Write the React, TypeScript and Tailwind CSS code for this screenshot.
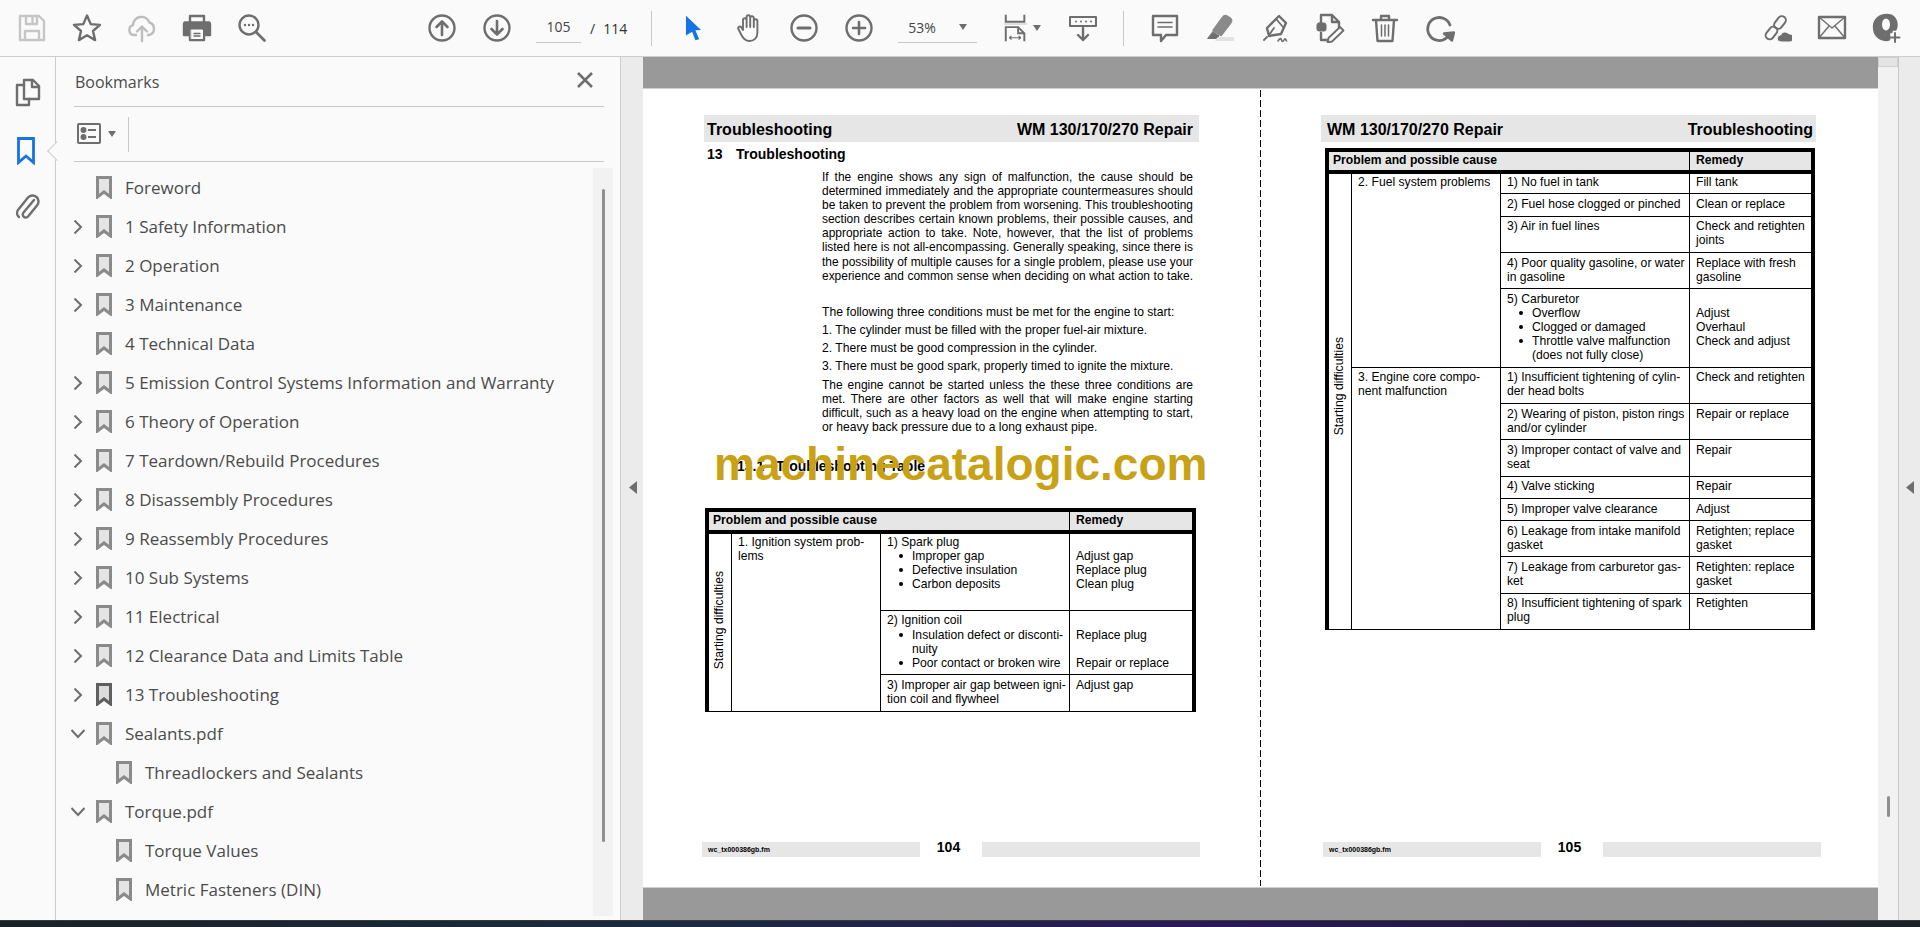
import React from 'react';

const Svg = ({ children, className = 'w-[30px] h-[30px]', box = '0 0 30 30' }: { children: React.ReactNode; className?: string; box?: string }) => (
  <svg viewBox={box} className={className} fill="none" stroke="#6e6e6e" strokeWidth="2.4" strokeLinejoin="round" strokeLinecap="round">
    {children}
  </svg>
);

const Tool = ({ children }: { children: React.ReactNode }) => (
  <div className="w-[55px] h-[56px] flex items-center justify-center shrink-0">{children}</div>
);

const Caret = () => (
  <svg viewBox="0 0 8 6" className="w-[8px] h-[6px]">
    <path d="M0 0h8L4 6z" fill="#6e6e6e" />
  </svg>
);

const ToolDivider = () => <div className="w-px h-[35px] bg-[#c8c8c8] shrink-0" />;

const Toolbar = () => (
  <div className="h-[57px] shrink-0 bg-[#fafafa] border-b border-[#cdcdcd] flex items-center pl-[4px] text-[#333] font-['Open_Sans',sans-serif] text-[15px]">
    <Tool>
      <Svg>
        <g stroke="#c6c6c6">
          <path d="M3 3h19l5 5v19H3z" />
          <path d="M9 3v8h11V3M15.5 5v4" />
          <path d="M8 27v-9h14v9" />
        </g>
      </Svg>
    </Tool>
    <Tool>
      <Svg>
        <path d="M15 2.5l3.7 8.6 9.3.8-7 6.1 2.1 9.1L15 22.3l-8.1 4.8L9 18 2 11.9l9.3-.8z" />
      </Svg>
    </Tool>
    <Tool>
      <Svg>
        <g stroke="#bdbdbd">
          <path d="M9 22H7a5 5 0 0 1-1-9.8A8.5 8.5 0 0 1 22.5 9.5 6.5 6.5 0 0 1 22 22h-1" />
          <path d="M15 28V14M10 18.5l5-5 5 5" />
        </g>
      </Svg>
    </Tool>
    <Tool>
      <Svg>
        <path d="M8 9V3h14v6" />
        <path d="M3 9.5h24a1.5 1.5 0 0 1 1 1.5v11h-6v5H8v-5H2V11a1.5 1.5 0 0 1 1-1.5z" fill="#6e6e6e" />
        <path d="M9.5 17h11v8.500h-11z" fill="#fafafa" stroke="#fafafa" strokeWidth="1" />
        <path d="M12 20.500h6M12 23h6" strokeWidth="1.400" />
      </Svg>
    </Tool>
    <Tool>
      <Svg>
        <circle cx="12" cy="12" r="9.500" />
        <path d="M19 19l8.500 8.500" strokeWidth="2.800" />
        <path d="M8 12h.01M12 12h.01M16 12h.01" strokeWidth="2.400" />
      </Svg>
    </Tool>
    <div className="ml-[135px] flex">
      <Tool>
        <Svg>
          <circle cx="15" cy="15" r="12.500" />
          <path d="M15 22V8.500M9.500 14L15 8.500l5.500 5.500" strokeWidth="2.600" />
        </Svg>
      </Tool>
      <Tool>
        <Svg>
          <circle cx="15" cy="15" r="12.500" />
          <path d="M15 8v13.500M9.500 16l5.500 5.500 5.500-5.500" strokeWidth="2.600" />
        </Svg>
      </Tool>
    </div>
    <div className="ml-[12px] w-[45px] h-[29px] mt-[1px] border-b border-[#c8c8c8] text-center leading-[26px] text-[14px] text-[#444]">105</div>
    <span className="ml-[9px] text-[14px]">/</span>
    <span className="ml-[8px] text-[14px] w-[24px]">114</span>
    <div className="ml-[24px]">
      <ToolDivider />
    </div>
    <div className="ml-[14px] flex">
      <Tool>
        <svg viewBox="0 0 18 26" className="w-[17px] h-[26px]">
          <path d="M1 0l16 15-6 .5L15 25l-4 1-3.500-9L1 21z" fill="#1473e6" />
        </svg>
      </Tool>
      <Tool>
        <Svg>
          <path d="M9 17V7a1.800 1.800 0 0 1 3.600 0v7V4a1.800 1.800 0 0 1 3.600 0v10V5a1.800 1.800 0 0 1 3.600 0v9V8a1.800 1.800 0 0 1 3.600 0v12c0 5-3.500 8-8 8-4 0-6-2-8-6l-3-6c-1-2 1.500-3.500 3-1.500z" strokeWidth="1.900" />
        </Svg>
      </Tool>
      <Tool>
        <Svg>
          <circle cx="15" cy="15" r="12.500" />
          <path d="M9 15h12" strokeWidth="3" />
        </Svg>
      </Tool>
      <Tool>
        <Svg>
          <circle cx="15" cy="15" r="12.500" />
          <path d="M9 15h12M15 9v12" strokeWidth="2.600" />
        </Svg>
      </Tool>
    </div>
    <div className="ml-[12px] w-[79px] h-[29px] mt-[1px] border-b border-[#c8c8c8] flex items-center text-[14px] text-[#444] pb-[2px]">
      <span className="ml-[10px] w-[51px]">53%</span>
      <Caret />
    </div>
    <div className="ml-[22px] w-[32px] flex items-center justify-center">
      <svg viewBox="0 0 26 30" className="w-[23px] h-[30px]" fill="none" stroke="#6e6e6e" strokeWidth="2.200">
        <path d="M2 0v8h21V0" />
        <path d="M0 10.500h26" stroke="#dcdcdc" strokeWidth="2" />
        <path d="M2 30V14h14l7 7v9M16 14v7h7" />
        <path d="M6 26h13M6 26l2.500-2M6 26l2.500 2M19 26l-2.500-2M19 26l-2.500 2" strokeWidth="1.300" />
      </svg>
    </div>
    <div className="ml-[2px]">
      <Caret />
    </div>
    <div className="ml-[14px] flex">
      <Tool>
        <Svg>
          <path d="M2 4h26v9H2z" strokeWidth="2" />
          <path d="M8 8.500h.01M13 8.500h.01M18 8.500h.01M23 8.500h.01" strokeWidth="2" />
          <path d="M15 15v12M10 22l5 5 5-5" strokeWidth="2.400" />
        </Svg>
      </Tool>
    </div>
    <div className="ml-[13px]">
      <ToolDivider />
    </div>
    <div className="ml-[13px] flex">
      <Tool>
        <Svg>
          <path d="M3 3h24v19H16l-5 6v-6H3z" />
          <path d="M8 9.500h14M8 14h14" strokeWidth="1.600" />
        </Svg>
      </Tool>
      <Tool>
        <Svg>
          <path d="M18 4.500a3 3 0 0 1 4-1l3 2a3 3 0 0 1 .5 4L16 22l-7.500-4.500z" fill="#8a8a8a" stroke="#8a8a8a" />
          <path d="M8 19l6 4-3 2.500H3z" fill="#6e6e6e" strokeWidth="1" />
          <path d="M13 24h16v4H10z" fill="#e2e2e2" stroke="none" />
        </Svg>
      </Tool>
      <Tool>
        <Svg>
          <path d="M19 3l7 7-5 11-12 2-2-8z" />
          <path d="M7 24L4 27M14 15l-5 7M23 14l-6-7" strokeWidth="1.800" />
          <path d="M18 28c2-3 3-3 3.500-1s1.500 2 2.500 0 1.500-1 2.500 1" strokeWidth="1.600" />
        </Svg>
      </Tool>
      <Tool>
        <Svg>
          <path d="M6 10V2h11l7 7v5M17 2v7h7M6 20v7h7" />
          <rect x="2" y="10" width="9" height="8" rx="2" fill="#6e6e6e" strokeWidth="1" />
          <path d="M25 14l3.500 3.500L17 28.500l-4.500 1 1-4.500z" strokeWidth="1.800" />
        </Svg>
      </Tool>
      <Tool>
        <Svg>
          <path d="M3 7h24M11 7V3h8v4M6 7l1.500 21h15L24 7" />
          <path d="M11.500 12v11M15 12v11M18.500 12v11" strokeWidth="1.500" />
        </Svg>
      </Tool>
      <Tool>
        <Svg>
          <path d="M22 24.500A11.500 11.500 0 1 1 25 12" strokeWidth="2.800" />
          <path d="M19 20.500l10-1-2 8z" fill="#6e6e6e" />
        </Svg>
      </Tool>
    </div>
    <div className="ml-auto flex pr-[6px]">
      <Tool>
        <Svg>
          <g transform="rotate(-52 9.500 20)" strokeWidth="2">
            <rect x="2.500" y="16" width="14" height="8" rx="4" />
          </g>
          <g transform="rotate(-52 18 9.500)" strokeWidth="2">
            <rect x="11" y="5.500" width="14" height="8" rx="4" />
          </g>
          <path d="M19 29a3.500 3.500 0 0 1-.5-7 5 5 0 0 1 8.500-1 4 4 0 0 1 1 8z" fill="#6e6e6e" stroke="#fafafa" strokeWidth="1" />
        </Svg>
      </Tool>
      <Tool>
        <Svg>
          <path d="M2 4h26v21H2z" />
          <path d="M2 4l13 11L28 4M2 25l10-12M28 25L18 13" strokeWidth="1.400" />
        </Svg>
      </Tool>
      <Tool>
        <Svg>
          <path d="M15 2c6 0 9.500 4 9.500 10 0 1.500-.5 3.500-1 4.500h-4v2.500h-2.500v7.500c-1 .5-2 .5-3 .5C7 27 2 21.500 2 14 2 7 7 2 15 2z" fill="#6e6e6e" />
          <ellipse cx="14" cy="11.500" rx="4" ry="6" fill="#fafafa" stroke="none" />
          <path d="M23 20v9M18.500 24.500h9" strokeWidth="2" />
        </Svg>
      </Tool>
    </div>
  </div>
);

const Rail = () => (
  <div className="w-[56px] shrink-0 bg-[#fafafa] border-r border-[#cdcdcd] relative flex flex-col items-center">
    <div className="mt-[21px] ml-[1px]">
      <Svg className="w-[26px] h-[29px]" box="0 0 26 29">
        <path d="M9 21V2h9l6 6v13z" />
        <path d="M17 2v7h7" />
        <path d="M9 7H2v20h12v-6" />
      </Svg>
    </div>
    <div className="mt-[30px] -ml-[4px]">
      <svg viewBox="0 0 18 28" className="w-[18px] h-[28px]" fill="none" stroke="#1473e6" strokeWidth="2.800">
        <path d="M1.500 1.500h15v24L9 19l-7.500 6.500z" />
      </svg>
    </div>
    <div className="mt-[26px] -ml-[2px]">
      <Svg className="w-[26px] h-[30px]" box="0 0 26 30">
        <path d="M20 9L9.500 21.500a3 3 0 0 0 4.500 4l9-11a6 6 0 0 0-9-8L4 19a5 5 0 0 0 1 7" strokeWidth="2.400" />
      </Svg>
    </div>
    {/* notch next to the active tab */}
    <div className="absolute right-[-1px] top-[87px] w-[14px] h-[14px] rotate-45 translate-x-[8px] bg-[#fafafa] border-l border-b border-[#cdcdcd]" />
  </div>
);

const Mark = ({ dark }: { dark?: boolean }) => (
  <svg viewBox="0 0 16 23" className="w-[16px] h-[23px] shrink-0">
    <path d="M1.500 1.500h13v19.500L8 16l-6.500 5z" fill={dark ? '#dcdcdc' : '#e4e4e4'} stroke={dark ? '#5f5f5f' : '#8a8a8a'} strokeWidth="3" />
  </svg>
);

const Chevron = ({ open }: { open?: boolean }) => (
  <svg viewBox="0 0 14 14" className="w-[14px] h-[14px] shrink-0" fill="none" stroke="#6e6e6e" strokeWidth="2">
    {open ? <path d="M.5 3l6.500 7 6.500-7" /> : <path d="M3.500 .5l6.500 6.500-6.500 6.500" />}
  </svg>
);

const marks: { label: string; arrow?: boolean; open?: boolean; nested?: boolean; dark?: boolean }[] = [
  { label: 'Foreword' },
  { label: '1 Safety Information', arrow: true },
  { label: '2 Operation', arrow: true },
  { label: '3 Maintenance', arrow: true },
  { label: '4 Technical Data' },
  { label: '5 Emission Control Systems Information and Warranty', arrow: true },
  { label: '6 Theory of Operation', arrow: true },
  { label: '7 Teardown/Rebuild Procedures', arrow: true },
  { label: '8 Disassembly Procedures', arrow: true },
  { label: '9 Reassembly Procedures', arrow: true },
  { label: '10 Sub Systems', arrow: true },
  { label: '11 Electrical', arrow: true },
  { label: '12 Clearance Data and Limits Table', arrow: true },
  { label: '13 Troubleshooting', arrow: true, dark: true },
  { label: 'Sealants.pdf', arrow: true, open: true },
  { label: 'Threadlockers and Sealants', nested: true },
  { label: 'Torque.pdf', arrow: true, open: true },
  { label: 'Torque Values', nested: true },
  { label: 'Metric Fasteners (DIN)', nested: true },
];

const BookmarksPanel = () => (
  <div className="w-[565px] shrink-0 bg-[#fafafa] border-r border-[#cdcdcd] flex flex-col pl-[18px] pr-[16px] font-['Open_Sans',sans-serif]">
    <div className="h-[50px] shrink-0 border-b border-[#c8c8c8] flex items-center justify-between">
      <span className="ml-[1px] text-[16px] text-[#4b4b4b]">Bookmarks</span>
      <svg viewBox="0 0 16 16" className="w-[16px] h-[16px] mr-[11px] -mt-[3px]" stroke="#6e6e6e" strokeWidth="2.600">
        <path d="M1 1l14 14M15 1L1 15" />
      </svg>
    </div>
    <div className="h-[55px] shrink-0 border-b border-[#c8c8c8] flex items-center pl-[3px]">
      <svg viewBox="0 0 24 21" className="w-[24px] h-[21px] -mt-[1px]" fill="none" stroke="#6e6e6e" strokeWidth="2">
        <rect x="1" y="1" width="22" height="19" rx="1" />
        <circle cx="6.500" cy="7" r="2" fill="#6e6e6e" />
        <circle cx="6.500" cy="14" r="2" fill="#6e6e6e" />
        <path d="M11 7h8M11 14h8" />
      </svg>
      <div className="ml-[7px]">
        <Caret />
      </div>
      <div className="ml-[12px] w-px h-[35px] bg-[#c8c8c8]" />
    </div>
    <div className="flex-1 flex pt-[6px] min-h-0">
      <div className="flex-1 min-w-0 text-[17px] text-[#4b4b4b]">
        {marks.map((m) => (
          <div key={m.label} className={m.nested ? 'h-[39px] flex items-center pl-[42px]' : 'h-[39px] flex items-center pl-[22px]'}>
            {!m.nested && (
              <div className="-ml-[25px] w-[25px] flex justify-start">{m.arrow && <Chevron open={m.open} />}</div>
            )}
            <Mark dark={m.dark} />
            <span className="ml-[13px] whitespace-nowrap">{m.label}</span>
          </div>
        ))}
      </div>
      <div className="w-[20px] shrink-0 mr-[-9px] mb-[4px] bg-[#f2f2f2] flex justify-center pt-[21px]">
        <div className="w-[3px] h-[653px] rounded-full bg-[#8f8f8f]" />
      </div>
    </div>
  </div>
);

const Arrow = () => (
  <svg viewBox="0 0 8 13" className="w-[8px] h-[13px]">
    <path d="M8 0v13L0 6.500z" fill="#6e6e6e" />
  </svg>
);

/* pdf pages */

const Line = ({ children, justify }: { children: React.ReactNode; justify?: boolean }) => (
  <div className={justify ? 'h-[14px] leading-[14px] text-[11.95px] [text-align:justify] [text-align-last:justify]' : 'h-[14px] leading-[14px] whitespace-nowrap'}>
    {children}
  </div>
);

const Bullet = ({ children, cont }: { children: React.ReactNode; cont?: boolean }) => (
  <div className="relative pl-[25px] h-[14px] leading-[14px] whitespace-nowrap">
    {!cont && <span className="absolute left-[12px] top-[5px] w-[4px] h-[4px] rounded-full bg-black" />}
    {children}
  </div>
);

type Row = { cls: string; cause: React.ReactNode; remedy: React.ReactNode };
type Section = { title: React.ReactNode; titleCls: string; rows: Row[] };

const Lines = ({ items }: { items: string[] }) => (
  <>
    {items.map((t, i) => (
      <Line key={i}>{t === '' ? '\u00a0' : t}</Line>
    ))}
  </>
);

const sectionsLeft: Section[] = [
  {
    title: <Lines items={['1. Ignition system prob-', 'lems']} />,
    titleCls: 'pt-[1px]',
    rows: [
      {
        cls: 'h-[77px] pt-[1px]',
        cause: (
          <>
            <Line>1) Spark plug</Line>
            <Bullet>Improper gap</Bullet>
            <Bullet>Defective insulation</Bullet>
            <Bullet>Carbon deposits</Bullet>
          </>
        ),
        remedy: <Lines items={['', 'Adjust gap', 'Replace plug', 'Clean plug']} />,
      },
      {
        cls: 'h-[64px] pt-[2px]',
        cause: (
          <>
            <Line>2) Ignition coil</Line>
            <div className="h-px" />
            <Bullet>Insulation defect or disconti-</Bullet>
            <Bullet cont>nuity</Bullet>
            <Bullet>Poor contact or broken wire</Bullet>
          </>
        ),
        remedy: (
          <>
            <Line>{'\u00a0'}</Line>
            <div className="h-px" />
            <Lines items={['Replace plug', '', 'Repair or replace']} />
          </>
        ),
      },
      {
        cls: 'h-[37px] pt-[3px]',
        cause: <Lines items={['3) Improper air gap between igni-', 'tion coil and flywheel']} />,
        remedy: <Line>Adjust gap</Line>,
      },
    ],
  },
];

const sectionsRight: Section[] = [
  {
    title: <Line>2. Fuel system problems</Line>,
    titleCls: 'pt-[1px]',
    rows: [
      { cls: 'h-[20px] pt-[1px]', cause: <Line>1) No fuel in tank</Line>, remedy: <Line>Fill tank</Line> },
      { cls: 'h-[23px] pt-[3px]', cause: <Line>2) Fuel hose clogged or pinched</Line>, remedy: <Line>Clean or replace</Line> },
      { cls: 'h-[36px] pt-[2px]', cause: <Line>3) Air in fuel lines</Line>, remedy: <Lines items={['Check and retighten', 'joints']} /> },
      {
        cls: 'h-[36px] pt-[3px]',
        cause: <Lines items={['4) Poor quality gasoline, or water', 'in gasoline']} />,
        remedy: <Lines items={['Replace with fresh', 'gasoline']} />,
      },
      {
        cls: 'h-[79px] pt-[3px]',
        cause: (
          <>
            <Line>5) Carburetor</Line>
            <Bullet>Overflow</Bullet>
            <Bullet>Clogged or damaged</Bullet>
            <Bullet>Throttle valve malfunction</Bullet>
            <Bullet cont>(does not fully close)</Bullet>
          </>
        ),
        remedy: <Lines items={['', 'Adjust', 'Overhaul', 'Check and adjust']} />,
      },
    ],
  },
  {
    title: <Lines items={['3. Engine core compo-', 'nent malfunction']} />,
    titleCls: 'pt-[2px]',
    rows: [
      { cls: 'h-[36px] pt-[2px]', cause: <Lines items={['1) Insufficient tightening of cylin-', 'der head bolts']} />, remedy: <Line>Check and retighten</Line> },
      { cls: 'h-[36px] pt-[3px]', cause: <Lines items={['2) Wearing of piston, piston rings', 'and/or cylinder']} />, remedy: <Line>Repair or replace</Line> },
      { cls: 'h-[37px] pt-[3px]', cause: <Lines items={['3) Improper contact of valve and', 'seat']} />, remedy: <Line>Repair</Line> },
      { cls: 'h-[22px] pt-[2px]', cause: <Line>4) Valve sticking</Line>, remedy: <Line>Repair</Line> },
      { cls: 'h-[22px] pt-[3px]', cause: <Line>5) Improper valve clearance</Line>, remedy: <Line>Adjust</Line> },
      { cls: 'h-[36px] pt-[3px]', cause: <Lines items={['6) Leakage from intake manifold', 'gasket']} />, remedy: <Lines items={['Retighten; replace', 'gasket']} /> },
      { cls: 'h-[37px] pt-[3px]', cause: <Lines items={['7) Leakage from carburetor gas-', 'ket']} />, remedy: <Lines items={['Retighten: replace', 'gasket']} /> },
      { cls: 'h-[36px] pt-[2px]', cause: <Lines items={['8) Insufficient tightening of spark', 'plug']} />, remedy: <Line>Retighten</Line> },
    ],
  },
];

const TroubleTable = ({ sections, className, railCls }: { sections: Section[]; className: string; railCls: string }) => (
  <div className={className}>
    <div className="h-[18px] flex bg-[#e6e6e6] font-bold leading-[14px]">
      <div className="w-[361px] shrink-0 border-r border-black pl-[4px] pt-[1px]">Problem and possible cause</div>
      <div className="flex-1 pl-[6px] pt-[1px]">Remedy</div>
    </div>
    <div className="h-[4px] bg-black" />
    <div className="flex">
      <div className={railCls}>
        <span className="[writing-mode:vertical-rl] rotate-180 whitespace-nowrap">Starting difficulties</span>
      </div>
      <div className="flex-1 min-w-0">
        {sections.map((s, i) => (
          <div key={i} className="flex">
            <div className={'w-[149px] shrink-0 border-r border-b border-black pl-[6px] ' + s.titleCls}>{s.title}</div>
            <div className="flex-1 min-w-0">
              {s.rows.map((r, j) => (
                <div key={j} className={'flex border-b border-black ' + r.cls}>
                  <div className="w-[189px] shrink-0 -mt-[3px] pt-[3px] border-r border-black pl-[6px] -mb-[1px]">{r.cause}</div>
                  <div className="flex-1 pl-[6px]">{r.remedy}</div>
                </div>
              ))}
            </div>
          </div>
        ))}
      </div>
    </div>
  </div>
);

const PageFooter = ({ page, name, cls }: { page: string; name: string; cls: string }) => (
  <div className={'mt-auto mb-[30px] h-[15px] flex ' + cls}>
    <div className="w-[218px] bg-[#e6e6e6] pl-[6px] text-[7px] font-bold leading-[15px]">{name}</div>
    <div className="w-[62px] pr-[5px] text-center text-[14px] font-bold leading-[11px]">{page}</div>
    <div className="w-[218px] bg-[#e6e6e6]" />
  </div>
);

const LeftPage = () => (
  <div className="w-[617px] shrink-0 flex flex-col pl-[61px] pt-[26px] text-[12.15px] text-black relative">
    <div className="w-[495px] h-[27px] pt-[3px] bg-[#e6e6e6] flex items-center justify-between px-[3px] pr-[6px] text-[16px] font-bold">
      <span>Troubleshooting</span>
      <span>WM 130/170/270 Repair</span>
    </div>
    <div className="mt-[4px] h-[16px] pl-[3px] flex text-[14px] font-bold leading-[16px]">
      <span className="w-[29px]">13</span>
      <span>Troubleshooting</span>
    </div>
    <div className="ml-[118px] w-[371px] mt-[8px]">
      <Line justify>If the engine shows any sign of malfunction, the cause should be</Line>
      <Line justify>determined immediately and the appropriate countermeasures should</Line>
      <Line justify>be taken to prevent the problem from worsening. This troubleshooting</Line>
      <Line justify>section describes certain known problems, their possible causes, and</Line>
      <Line justify>appropriate action to take. Note, however, that the list of problems</Line>
      <Line justify>listed here is not all-encompassing. Generally speaking, since there is</Line>
      <div className="h-px" />
      <Line justify>the possibility of multiple causes for a single problem, please use your</Line>
      <Line justify>experience and common sense when deciding on what action to take.</Line>
      <div className="mt-[22px]">
        <Line>The following three conditions must be met for the engine to start:</Line>
      </div>
      <div className="mt-[4px] flex flex-col gap-[4px]">
        <Line>1. The cylinder must be filled with the proper fuel-air mixture.</Line>
        <Line>2. There must be good compression in the cylinder.</Line>
        <Line>3. There must be good spark, properly timed to ignite the mixture.</Line>
      </div>
      <div className="mt-[5px]">
        <Line justify>The engine cannot be started unless the these three conditions are</Line>
        <Line justify>met. There are other factors as well that will make engine starting</Line>
        <Line justify>difficult, such as a heavy load on the engine when attempting to start,</Line>
        <Line>or heavy back pressure due to a long exhaust pipe.</Line>
      </div>
    </div>
    <div className="mt-[24px] ml-[33px] h-[16px] flex text-[14px] font-bold leading-[16px]">
      <span className="w-[39px]">13.1</span>
      <span>Troubleshooting Table</span>
    </div>
    <TroubleTable
      sections={sectionsLeft}
      className="mt-[34px] ml-[1px] w-[491px] border-x-4 border-t-4 border-black"
      railCls="w-[23px] shrink-0 border-r border-b border-black flex items-center justify-center pb-[5px] pr-[2px]"
    />
    <PageFooter page="104" name="wc_tx000386gb.fm" cls="-ml-[2px]" />
    {/* watermark stamped over the page */}
    <div className="absolute left-[71px] top-[352px] text-[46px] leading-[46px] font-bold text-[#c9a114] whitespace-nowrap">machinecatalogic.com</div>
  </div>
);

const RightPage = () => (
  <div className="flex-1 flex flex-col pl-[60px] pt-[26px] text-[12.15px] text-black">
    <div className="w-[495px] h-[27px] pt-[3px] bg-[#e6e6e6] flex items-center justify-between pl-[6px] pr-[3px] text-[16px] font-bold">
      <span>WM 130/170/270 Repair</span>
      <span>Troubleshooting</span>
    </div>
    <TroubleTable
      sections={sectionsRight}
      className="mt-[6px] ml-[4px] w-[490px] border-x-4 border-t-4 border-black"
      railCls="w-[23px] shrink-0 border-r border-b border-black flex items-center justify-center pb-[31px] pr-[2px]"
    />
    <PageFooter page="105" name="wc_tx000386gb.fm" cls="ml-[2px]" />
  </div>
);

const DocArea = () => (
  <div className="w-[1235px] shrink-0 flex flex-col bg-[#999999] font-['Liberation_Sans',Arial,sans-serif]">
    <div className="h-[32px] shrink-0 border-b border-[#cfcfcf]" />
    <div className="flex-1 min-h-0 bg-white flex">
      <LeftPage />
      <div className="w-px shrink-0 my-[1px] bg-[repeating-linear-gradient(to_bottom,#000_0,#000_7px,transparent_7px,transparent_10px)]" />
      <RightPage />
    </div>
    <div className="h-[33px] shrink-0 border-t border-[#cfcfcf]" />
  </div>
);

export default function App() {
  return (
    <div className="w-[1920px] h-[927px] overflow-hidden flex flex-col bg-[#ebebeb]">
      <Toolbar />
      <div className="flex-1 min-h-0 flex">
        <Rail />
        <BookmarksPanel />
        <div className="w-[22px] shrink-0 bg-[#ebebeb] flex items-center justify-center pl-[1px] pb-[3px]">
          <Arrow />
        </div>
        <DocArea />
        {/* page scrollbar */}
        <div className="w-[21px] shrink-0 bg-[#f2f2f2] border-r border-[#c8c8c8] flex flex-col items-center">
          <div className="w-full h-[10px] bg-[#e4e4e4] border border-[#d0d0d0]" />
          <div className="mt-[729px] w-[3px] h-[21px] rounded-full bg-[#8f8f8f]" />
        </div>
        <div className="flex-1 bg-[#ebebeb] flex items-center justify-center pb-[3px]">
          <Arrow />
        </div>
      </div>
      <div className="h-[7px] shrink-0 border-t border-[#3a3a3a] bg-[linear-gradient(to_right,#1a2226,#1a2a40_35%,#2a1a55_62%,#1e1a3a_85%,#1c2226)]" />
    </div>
  );
}
